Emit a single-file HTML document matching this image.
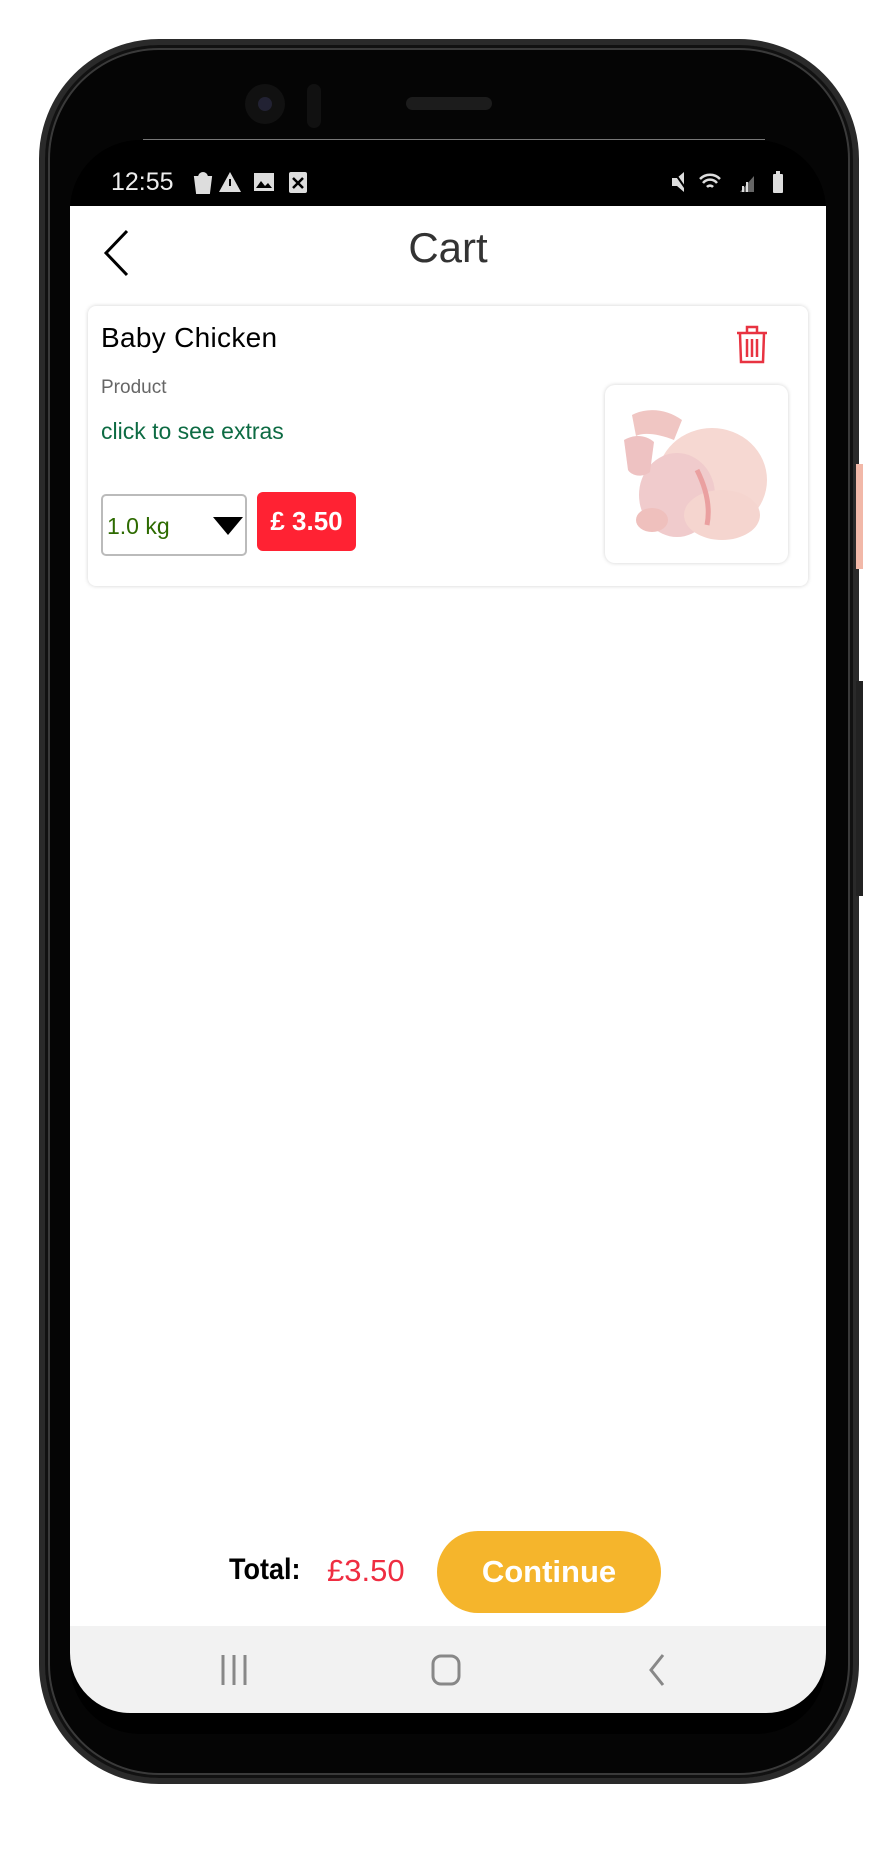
<!DOCTYPE html>
<html><head><meta charset="utf-8"><style>
*{margin:0;padding:0;box-sizing:border-box}
body{width:896px;height:1875px;background:#fff;position:relative;overflow:hidden;font-family:"Liberation Sans",sans-serif}
.abs{position:absolute}
.phone{left:39px;top:39px;width:820px;height:1745px;border-radius:120px;background:#050505;border:6px solid #2a2a2a;box-shadow:inset 0 0 0 3px #111,inset 0 0 0 5px #3a3a3a}
.screen{left:70px;top:140px;width:756px;height:1594px;background:#000;border-radius:70px;overflow:hidden}
.white{left:70px;top:206px;width:756px;height:1420px;background:#fff}
.nav{left:70px;top:1626px;width:756px;height:87px;background:#f2f2f2;border-radius:0 0 60px 60px}
.card{left:88px;top:306px;width:720px;height:280px;background:#fff;border-radius:8px;box-shadow:0 0 4px rgba(0,0,0,.18)}
.status{color:#eee;font-size:25px;top:168px;left:111px}
</style></head><body>
<div class="abs phone"></div>
<div class="abs" style="left:143px;top:139px;width:622px;height:1px;background:#777"></div>
<div class="abs" style="left:245px;top:84px;width:40px;height:40px;border-radius:50%;background:#111"></div>
<div class="abs" style="left:258px;top:97px;width:14px;height:14px;border-radius:50%;background:#223"></div>
<div class="abs" style="left:307px;top:84px;width:14px;height:44px;border-radius:7px;background:#111"></div>
<div class="abs" style="left:406px;top:97px;width:86px;height:13px;border-radius:7px;background:#1c1c1c"></div>
<div class="abs" style="left:856px;top:464px;width:7px;height:105px;background:#f2b8a8"></div>
<div class="abs" style="left:856px;top:681px;width:7px;height:215px;background:#222"></div>
<div class="abs screen"></div>
<div class="abs status">12:55</div>
<svg class="abs" style="left:192px;top:168px" width="140" height="28" viewBox="0 0 140 28">
<path d="M3 9h16l-2 16H5z M7 9a4 4 0 0 1 8 0" fill="#ddd" stroke="#ddd" stroke-width="2"/>
<path d="M38 4l11 20H27z" fill="#ddd"/><rect x="37" y="11" width="2" height="7" fill="#000"/>
<rect x="62" y="5" width="20" height="18" fill="#ddd"/><path d="M64 20l5-7 4 5 3-3 4 5z" fill="#000"/>
<rect x="97" y="4" width="18" height="21" rx="2" fill="#ddd"/><path d="M101 10l10 10M111 10l-10 10" stroke="#000" stroke-width="2.5"/>
</svg>
<svg class="abs" style="left:670px;top:168px" width="120" height="28" viewBox="0 0 120 28">
<path d="M2 10h5l7-6v20l-7-6H2z" fill="#ddd"/><path d="M4 4l14 20" stroke="#000" stroke-width="2"/>
<path d="M30 11a14 14 0 0 1 20 0M33 15a9 9 0 0 1 14 0M37 19a4 4 0 0 1 6 0" stroke="#ddd" stroke-width="2.5" fill="none"/>
<path d="M70 24l14-16v16z" fill="#666"/><rect x="72" y="18" width="2" height="6" fill="#ddd"/><rect x="76" y="14" width="2" height="10" fill="#ddd"/>
<rect x="103" y="6" width="10" height="19" rx="1" fill="#ddd"/><rect x="106" y="3" width="4" height="3" fill="#ddd"/>
</svg>
<div class="abs white"></div>
<svg class="abs" style="left:102px;top:229px" width="30" height="48"><path d="M25 2L4 24l21 22" stroke="#000" stroke-width="3" fill="none"/></svg>
<div class="abs" style="left:0;width:896px;text-align:center;top:224px;font-size:42px;color:#333">Cart</div>
<div class="abs card"></div>
<div class="abs" style="left:101px;top:322px;font-size:28px;color:#000;letter-spacing:0.3px">Baby Chicken</div>
<div class="abs" style="left:101px;top:377px;font-size:19px;color:#666">Product</div>
<div class="abs" style="left:101px;top:418px;font-size:23px;color:#0d6b43">click to see extras</div>
<div class="abs" style="left:101px;top:494px;width:146px;height:62px;border:2px solid #bbb;border-radius:5px"></div>
<div class="abs" style="left:107px;top:513px;font-size:23px;color:#2d6a00">1.0 kg</div>
<div class="abs" style="left:213px;top:517px;width:0;height:0;border-left:15px solid transparent;border-right:15px solid transparent;border-top:18px solid #000"></div>
<div class="abs" style="left:257px;top:492px;width:99px;height:59px;background:#ff2233;border-radius:6px;color:#fff;font-weight:bold;font-size:26px;text-align:center;line-height:59px">£ 3.50</div>
<svg class="abs" style="left:735px;top:324px" width="34" height="40" viewBox="0 0 34 40">
<g stroke="#e83341" stroke-width="2.5" fill="none"><path d="M2 9h30M12 8V3h10v5M5 10l1 28h22l1-28"/><path d="M12 15v18M17 15v18M22 15v18"/></g></svg>
<div class="abs" style="left:605px;top:385px;width:183px;height:178px;border-radius:10px;background:#fff;box-shadow:0 0 4px rgba(0,0,0,.18)"></div>
<svg class="abs" style="left:612px;top:395px" width="170" height="160" viewBox="0 0 170 160">
<ellipse cx="100" cy="85" rx="55" ry="52" fill="#f6d8d2"/>
<ellipse cx="65" cy="100" rx="38" ry="42" fill="#f0cbcc"/>
<path d="M20 20c15-8 35-6 50 5l-8 20c-15-6-30-8-38-4z" fill="#f0c6c3"/>
<path d="M12 45c10-6 22-5 30 2l-4 30c-8 6-18 4-22-2z" fill="#eec2c2"/>
<ellipse cx="110" cy="120" rx="38" ry="25" fill="#f5d5cf"/>
<ellipse cx="40" cy="125" rx="16" ry="12" fill="#efc0bd"/>
<path d="M85 75q15 30 10 55" stroke="#eaa0a0" stroke-width="5" fill="none"/>
</svg>
<div class="abs" style="left:229px;top:1553px;font-size:30px;color:#000;font-weight:bold;transform:scaleX(0.9);transform-origin:left">Total:</div>
<div class="abs" style="left:327px;top:1553px;font-size:31px;color:#ef2d41">£3.50</div>
<div class="abs" style="left:437px;top:1531px;width:224px;height:82px;border-radius:41px;background:#f5b52c;color:#fff;font-size:31px;font-weight:bold;text-align:center;line-height:82px">Continue</div>
<div class="abs nav"></div>
<svg class="abs" style="left:215px;top:1650px" width="470" height="40" viewBox="0 0 470 40">
<g stroke="#888" stroke-width="3" fill="none"><path d="M8 5v30M19 5v30M30 5v30"/><rect x="218" y="6" width="26" height="28" rx="8"/><path d="M448 5l-12 15 12 15"/></g></svg>
</body></html>
